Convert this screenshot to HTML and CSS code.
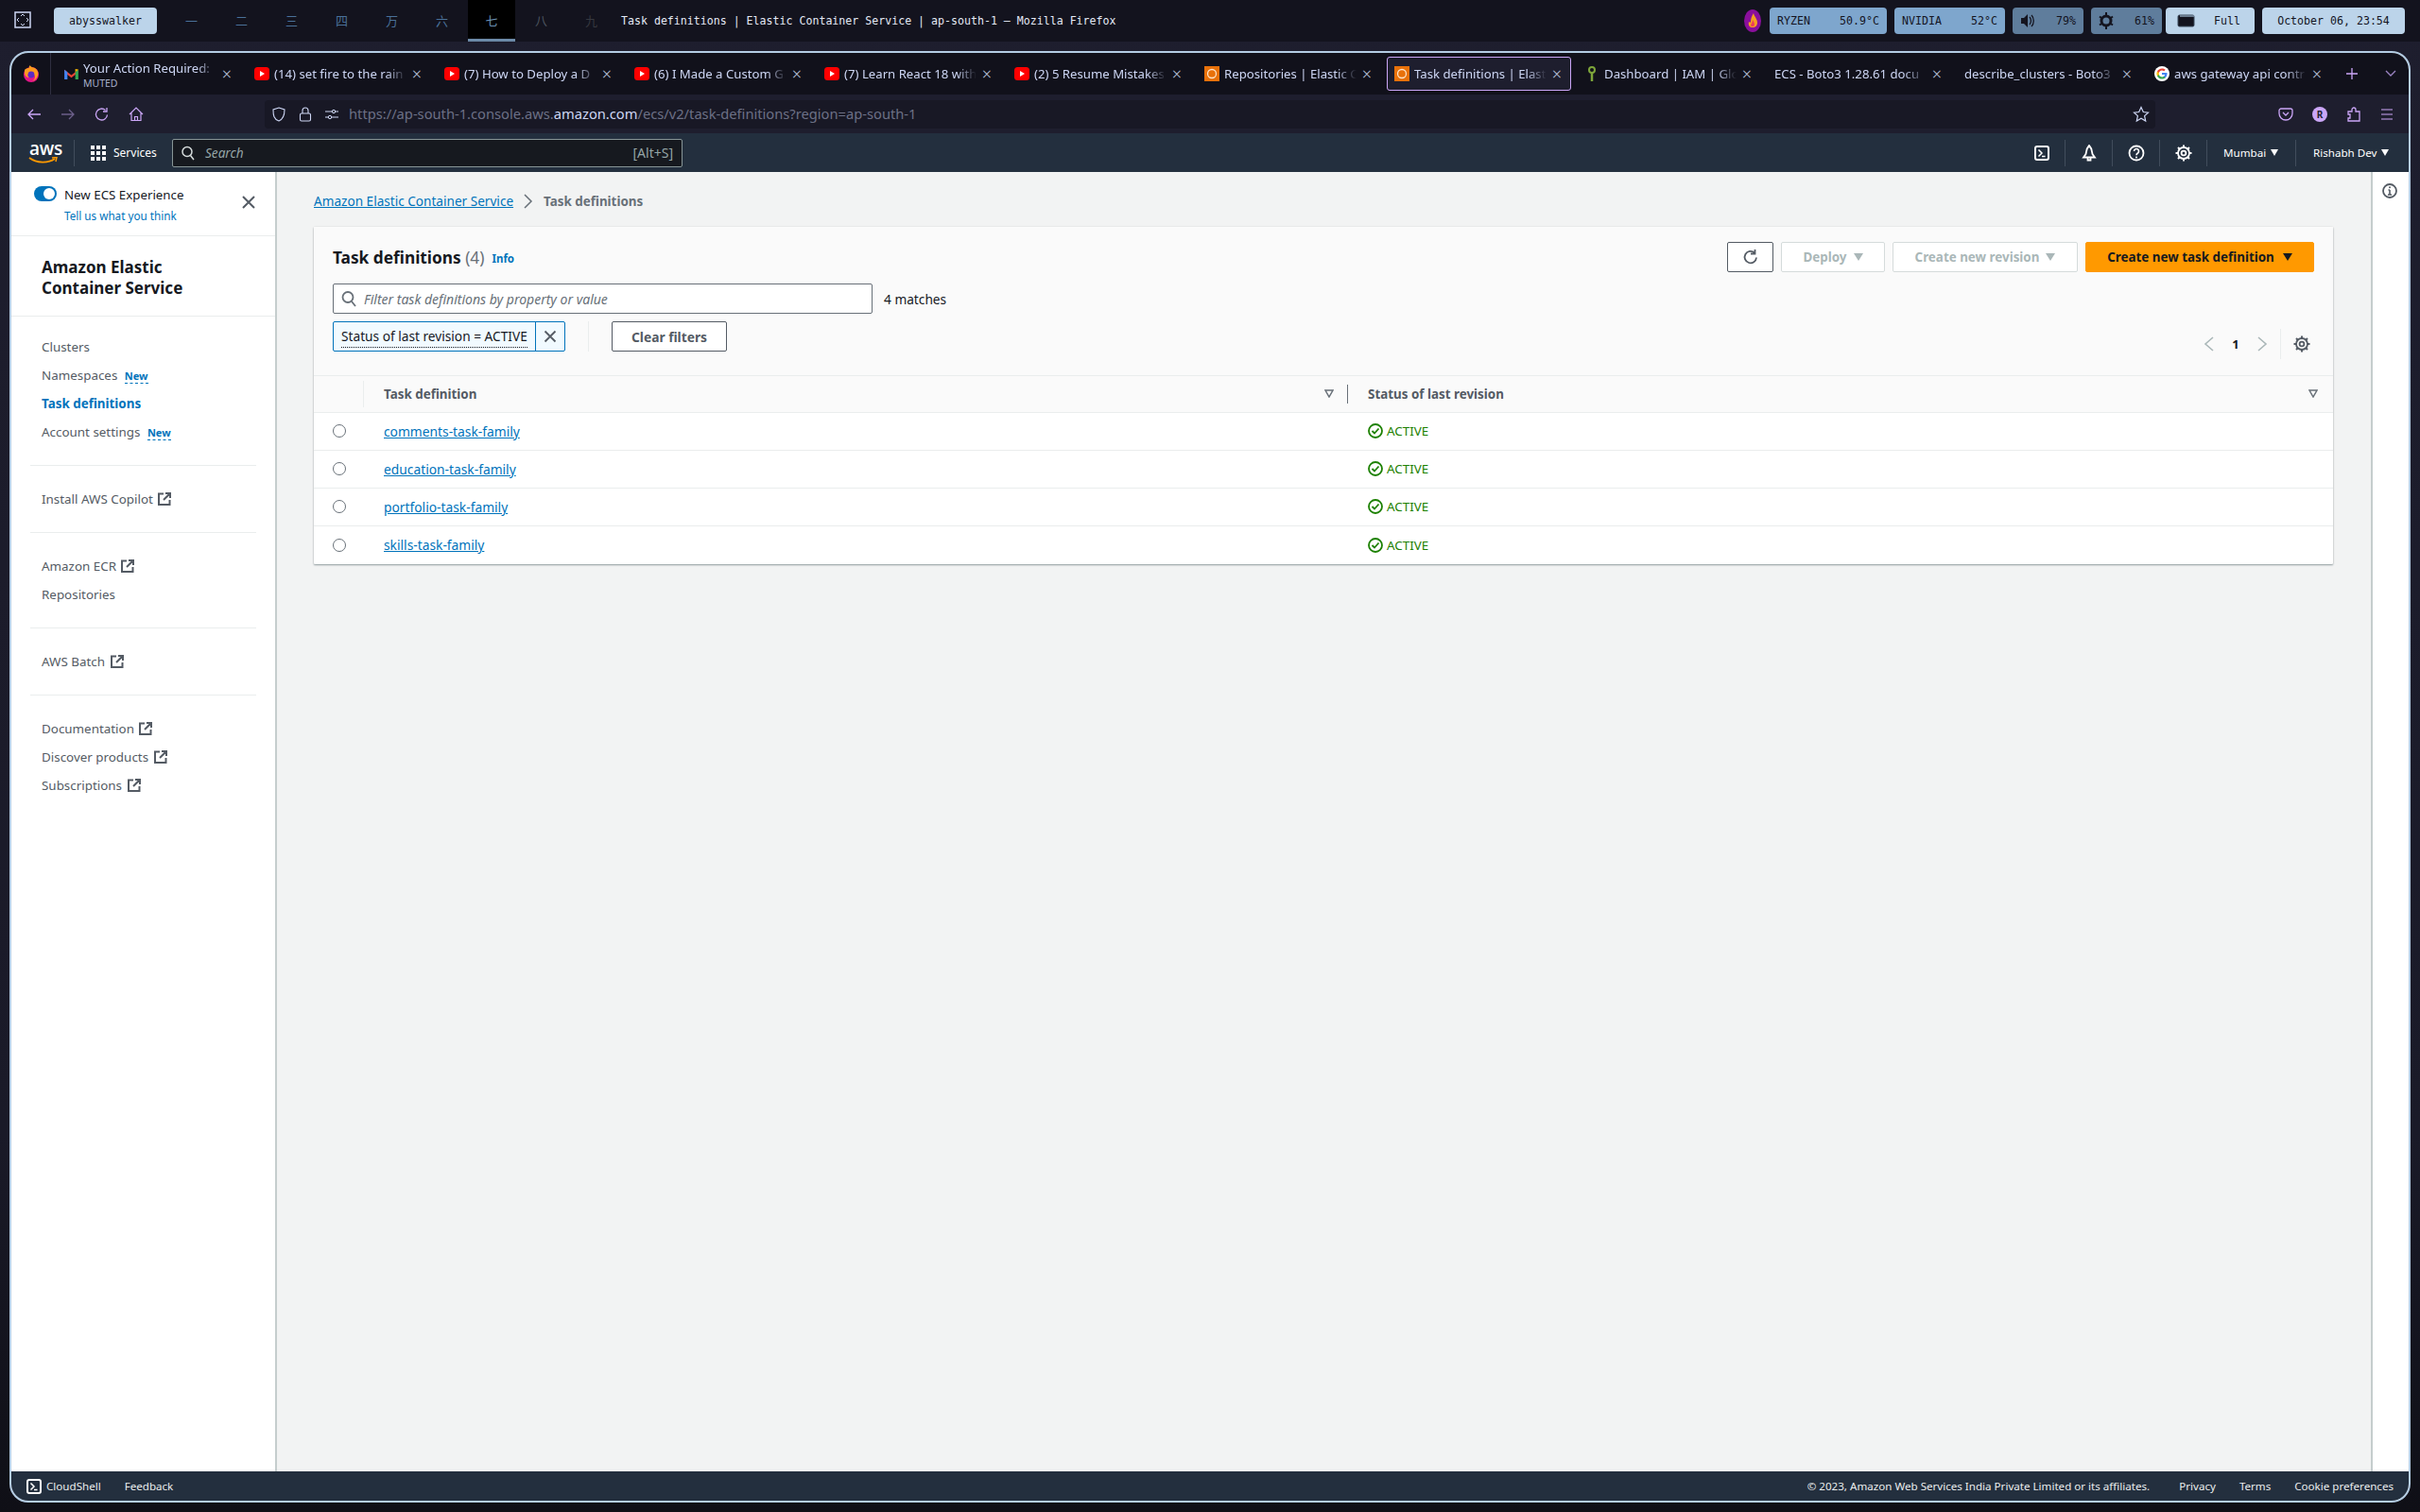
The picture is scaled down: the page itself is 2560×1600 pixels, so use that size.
FILE: index.html
```html
<!DOCTYPE html>
<html lang="en">
<head>
    <meta charset="UTF-8">
    <title>Task definitions | Elastic Container Service</title>
    <link rel="stylesheet" href="styles.css">
</head>
<body>
    <header class="wm-bar">
        <svg class="wm-logo" width="20" height="20" viewBox="0 0 20 20"><rect x="1" y="1" width="16" height="16" fill="none" stroke="#cdd6f4" stroke-width="1.5"/><path d="M7 5l2-2 2 2M7 13l2 2 2-2M5 7l-2 2 2 2M13 7l2 2-2 2" fill="none" stroke="#cdd6f4" stroke-width="1"/></svg>
        <div class="wm-user">abysswalker</div>
        <div class="wm-spaces">
            <span class="ws ws-a">一</span><span class="ws ws-a">二</span><span class="ws ws-a">三</span><span class="ws ws-a">四</span><span class="ws ws-a">万</span><span class="ws ws-a">六</span><span class="ws ws-on">七</span><span class="ws ws-b">八</span><span class="ws ws-c">九</span>
        </div>
        <div class="wm-title">Task definitions | Elastic Container Service | ap-south-1 – Mozilla Firefox</div>
        <div class="wm-right">
            <svg class="flame" width="18" height="24" viewBox="0 0 18 24"><ellipse cx="9" cy="12" rx="9" ry="12" fill="#8a0f9c"/><path d="M10 4c1 4 4 6 4 10 0 3-2 5-5 5s-5-2-4-6c1 1 2 1 2 0 0-3 1-6 3-9z" fill="#f5a020"/><path d="M9 11c1 2 2 3 2 5s-3 3-4 1c0-2 2-3 2-6z" fill="#ef3b5c"/></svg>
            <div class="pill pill-blue pill-ryzen"><span>RYZEN</span><span>50.9°C</span></div>
            <div class="pill pill-blue pill-nvidia"><span>NVIDIA</span><span>52°C</span></div>
            <div class="pill pill-slate pill-vol">
                <svg width="16" height="16" viewBox="0 0 16 16"><path d="M1 5h3l4-4v14l-4-4H1z" fill="#14141f"/><path d="M10 4c2 2 2 6 0 8M12 2c3 3 3 9 0 12" fill="none" stroke="#14141f" stroke-width="1.3"/></svg>
                <span>79%</span>
            </div>
            <div class="pill pill-slate pill-bright">
                <svg width="16" height="18" viewBox="0 0 16 18"><circle cx="8" cy="9" r="5" fill="none" stroke="#14141f" stroke-width="3"/><path d="M8 0v3M8 15v3M1 4.500l2 1.500M13 12l2 1.500M1 13.500l2-1.500M13 6l2-1.500" stroke="#14141f" stroke-width="2"/></svg>
                <span>61%</span>
            </div>
            <div class="pill pill-light pill-batt">
                <svg width="20" height="14" viewBox="0 0 20 14"><rect x="1" y="1" width="17" height="12" rx="1.500" fill="#14141f" stroke="#3b4a5c"/><rect x="3" y="1" width="15" height="2" fill="#6b7c8f"/></svg>
                <span>Full</span>
            </div>
            <div class="pill pill-light pill-date">October 06, 23:54</div>
        </div>
    </header>

    <div class="window">
        <div class="tabbar">
            <div class="ff-slot">
                <svg width="18" height="18" viewBox="0 0 18 18"><circle cx="9" cy="10" r="8" fill="#e31587"/><path d="M2 5c2-2 4-2 5-2-1-1 0-2 1-3 0 2 3 2 5 3 3 2 4 5 3 8-1 3-3 5-6 6 3-2 4-5 2-7-1-2-4-2-6-1-1 1-1 3 1 4-3 0-5-2-5-5 0-1 0-2 0-3z" fill="#ff9a1f"/><circle cx="9" cy="10" r="3.400" fill="#5b2bc4"/></svg>
            </div>
            <div class="tab tab-mail">
                <svg class="fav" width="15" height="12" viewBox="0 0 16 13"><path d="M0 2l8 6 8-6v3l-8 6-8-6z" fill="#ea4335"/><path d="M0 2v11h3.500V4.600z" fill="#4285f4"/><path d="M16 2v11h-3.500V4.600z" fill="#34a853"/><path d="M12.500 4.600L16 2v-.5L12.500 1z" fill="#fbbc04"/></svg>
                <div class="tab-stack"><span class="tab-text">Your Action Required:</span><span class="tab-sub">MUTED</span></div>
                <span class="tab-x">×</span>
            </div>
            <div class="tab"><svg class="fav" width="16" height="16" viewBox="0 0 16 16"><rect y="1" width="16" height="14" rx="3.500" fill="#f00"/><path d="M6 5l5 3-5 3z" fill="#fff"/></svg><span class="tab-text">(14) set fire to the rain</span><span class="tab-x">×</span></div>
            <div class="tab"><svg class="fav" width="16" height="16" viewBox="0 0 16 16"><rect y="1" width="16" height="14" rx="3.500" fill="#f00"/><path d="M6 5l5 3-5 3z" fill="#fff"/></svg><span class="tab-text">(7) How to Deploy a D</span><span class="tab-x">×</span></div>
            <div class="tab"><svg class="fav" width="16" height="16" viewBox="0 0 16 16"><rect y="1" width="16" height="14" rx="3.500" fill="#f00"/><path d="M6 5l5 3-5 3z" fill="#fff"/></svg><span class="tab-text">(6) I Made a Custom G</span><span class="tab-x">×</span></div>
            <div class="tab"><svg class="fav" width="16" height="16" viewBox="0 0 16 16"><rect y="1" width="16" height="14" rx="3.500" fill="#f00"/><path d="M6 5l5 3-5 3z" fill="#fff"/></svg><span class="tab-text">(7) Learn React 18 with</span><span class="tab-x">×</span></div>
            <div class="tab"><svg class="fav" width="16" height="16" viewBox="0 0 16 16"><rect y="1" width="16" height="14" rx="3.500" fill="#f00"/><path d="M6 5l5 3-5 3z" fill="#fff"/></svg><span class="tab-text">(2) 5 Resume Mistakes</span><span class="tab-x">×</span></div>
            <div class="tab"><svg class="fav" width="16" height="16" viewBox="0 0 16 16"><rect width="16" height="16" fill="#e8710a"/><circle cx="8" cy="8" r="4.500" fill="none" stroke="#fde3c8" stroke-width="1.300"/></svg><span class="tab-text">Repositories | Elastic C</span><span class="tab-x">×</span></div>
            <div class="tab tab-on"><svg class="fav" width="16" height="16" viewBox="0 0 16 16"><rect width="16" height="16" fill="#e8710a"/><circle cx="8" cy="8" r="4.500" fill="none" stroke="#fde3c8" stroke-width="1.300"/></svg><span class="tab-text">Task definitions | Elast</span><span class="tab-x">×</span></div>
            <div class="tab"><svg class="fav" width="16" height="16" viewBox="0 0 16 16"><circle cx="8" cy="4" r="3" fill="none" stroke="#7da53a" stroke-width="2"/><path d="M8 7v9" stroke="#7da53a" stroke-width="2.500"/></svg><span class="tab-text">Dashboard | IAM | Glob</span><span class="tab-x">×</span></div>
            <div class="tab"><span class="tab-text">ECS - Boto3 1.28.61 docu</span><span class="tab-x">×</span></div>
            <div class="tab"><span class="tab-text">describe_clusters - Boto3</span><span class="tab-x">×</span></div>
            <div class="tab"><svg class="fav" width="16" height="16" viewBox="0 0 16 16"><circle cx="8" cy="8" r="8" fill="#fff"/><path d="M13.500 8.100c0-.4 0-.8-.1-1.100H8v2.100h3.100c-.1.700-.5 1.300-1.100 1.700v1.400h1.800c1.100-1 1.700-2.400 1.700-4.100z" fill="#4285f4"/><path d="M8 13.600c1.500 0 2.800-.5 3.800-1.400L10 10.800c-.5.300-1.200.6-2 .6-1.500 0-2.700-1-3.100-2.300H3v1.400c.9 1.900 2.800 3.100 5 3.100z" fill="#34a853"/><path d="M4.900 9.100c-.2-.7-.2-1.500 0-2.200V5.500H3c-.8 1.500-.8 3.500 0 5z" fill="#fbbc04"/><path d="M8 4.600c.8 0 1.600.3 2.100.8l1.600-1.600C10.800 2.900 9.500 2.400 8 2.400c-2.200 0-4.100 1.300-5 3.100l1.900 1.400C5.300 5.600 6.500 4.600 8 4.600z" fill="#ea4335"/></svg><span class="tab-text">aws gateway api contr</span><span class="tab-x">×</span></div>
            <svg class="tab-plus" width="16" height="16" viewBox="0 0 16 16"><path d="M8 2v12M2 8h12" stroke="#cba6f7" stroke-width="1.300"/></svg>
            <svg class="tab-more" width="14" height="10" viewBox="0 0 14 10"><path d="M2 2l5 5 5-5" fill="none" stroke="#9c84c4" stroke-width="1.300"/></svg>
        </div>

        <div class="navbar">
            <div class="nav-btns">
                <svg width="16" height="16" viewBox="0 0 16 16"><path d="M15 8H2M7 3L2 8l5 5" fill="none" stroke="#cba6f7" stroke-width="1.300"/></svg>
                <svg width="16" height="16" viewBox="0 0 16 16"><path d="M1 8h13M9 3l5 5-5 5" fill="none" stroke="#6c5f8a" stroke-width="1.300"/></svg>
                <svg width="16" height="16" viewBox="0 0 16 16"><path d="M13.500 8.500A6 6 0 1 1 11.500 3.500M13 1v4H9" fill="none" stroke="#cba6f7" stroke-width="1.300"/></svg>
                <svg width="16" height="16" viewBox="0 0 16 16"><path d="M1 8l7-7 7 7M3 6.500V14.500h10V6.500M6.500 14.500v-4h3v4" fill="none" stroke="#cba6f7" stroke-width="1.200"/></svg>
            </div>
            <div class="urlbar">
                <svg width="14" height="16" viewBox="0 0 14 16"><path d="M7 1l6 2c0 6-1 10-6 12C1.500 13 1 9 1 3z" fill="none" stroke="#cdd6f4" stroke-width="1.100"/></svg>
                <svg class="url-lock" width="14" height="16" viewBox="0 0 14 16"><rect x="1.500" y="7" width="11" height="8" rx="1.500" fill="none" stroke="#cdd6f4" stroke-width="1.100"/><path d="M4 7V4a3 3 0 0 1 6 0v3" fill="none" stroke="#cdd6f4" stroke-width="1.100"/></svg>
                <svg class="url-perm" width="16" height="14" viewBox="0 0 16 14"><path d="M1 4h7M12 4h3M1 10h3M8 10h7" stroke="#cdd6f4" stroke-width="1.100"/><circle cx="10" cy="4" r="1.700" fill="none" stroke="#cdd6f4"/><circle cx="6" cy="10" r="1.700" fill="none" stroke="#cdd6f4"/></svg>
                <div class="url"><span>https://ap-south-1.console.aws.</span><b>amazon.com</b><span>/ecs/v2/task-definitions?region=ap-south-1</span></div>
                <svg class="url-star" width="18" height="18" viewBox="0 0 18 18"><path d="M9 1.500l2.300 5 5.200.6-3.900 3.500 1.100 5.400L9 13.300 4.300 16l1.100-5.400L1.500 7.100l5.200-.6z" fill="none" stroke="#cdd6f4" stroke-width="1.200"/></svg>
            </div>
            <div class="nav-right">
                <svg width="16" height="16" viewBox="0 0 16 16"><path d="M3 2h10a2 2 0 0 1 2 2v3A7 7 0 0 1 1 7V4a2 2 0 0 1 2-2z" fill="none" stroke="#cba6f7" stroke-width="1.300"/><path d="M5 6l3 3 3-3" fill="none" stroke="#cba6f7" stroke-width="1.300"/></svg>
                <span class="avatar">R</span>
                <svg width="16" height="18" viewBox="0 0 16 18"><path d="M2 6h4V4a2 2 0 0 1 4 0v2h4v10H2v-3h2v-4H2z" fill="none" stroke="#cba6f7" stroke-width="1.300"/></svg>
                <svg width="14" height="14" viewBox="0 0 14 14"><path d="M1 2h12M1 7h12M1 12h12" stroke="#cba6f7" stroke-width="1.200"/></svg>
            </div>
        </div>

        <div class="aws-head">
            <div class="aws-logo">
                <span class="aws-word">aws</span>
                <svg width="32" height="9" viewBox="0 0 32 9"><path d="M1 1c8 6 20 6 27 1" fill="none" stroke="#ff9900" stroke-width="1.800"/><path d="M25 1l5-.5-1 4.500" fill="none" stroke="#ff9900" stroke-width="1.500"/></svg>
            </div>
            <div class="aws-services">
                <svg width="16" height="16" viewBox="0 0 16 16" fill="#fff"><rect width="4" height="4"/><rect x="6" width="4" height="4"/><rect x="12" width="4" height="4"/><rect y="6" width="4" height="4"/><rect x="6" y="6" width="4" height="4"/><rect x="12" y="6" width="4" height="4"/><rect y="12" width="4" height="4"/><rect x="6" y="12" width="4" height="4"/><rect x="12" y="12" width="4" height="4"/></svg>
                <span>Services</span>
            </div>
            <div class="aws-search">
                <svg width="14" height="16" viewBox="0 0 14 16"><circle cx="6" cy="6.500" r="5" fill="none" stroke="#d5dbdb" stroke-width="1.500"/><path d="M9.500 10.500l3.500 4.500" stroke="#d5dbdb" stroke-width="1.500"/></svg>
                <i>Search</i>
                <span>[Alt+S]</span>
            </div>
            <div class="aws-right">
                <div class="aws-ico"><svg width="16" height="16" viewBox="0 0 16 16"><rect x="1" y="1" width="14" height="14" rx="2" fill="none" stroke="#fff" stroke-width="2"/><path d="M4.500 4.500L8 8l-3.500 3.500M8 11.500h3.500" fill="none" stroke="#fff" stroke-width="1.500"/></svg></div>
                <div class="aws-ico"><svg width="16" height="18" viewBox="0 0 16 18"><path d="M8 1C5 4 5 8 4.500 10L2 13.500h12L11.500 10C11 8 11 4 8 1zM6.500 14v2.500h3V14" fill="none" stroke="#fff" stroke-width="1.800"/></svg></div>
                <div class="aws-ico"><svg width="18" height="18" viewBox="0 0 18 18"><circle cx="9" cy="9" r="7.500" fill="none" stroke="#fff" stroke-width="1.800"/><path d="M6.500 7a2.500 2.500 0 1 1 4 2c-1 .7-1.500 1.200-1.500 2.200" fill="none" stroke="#fff" stroke-width="1.600"/><circle cx="9" cy="13.500" r="1" fill="#fff"/></svg></div>
                <div class="aws-ico"><svg width="18" height="18" viewBox="0 0 18 18"><circle cx="9" cy="9" r="6" fill="none" stroke="#fff" stroke-width="1.800"/><circle cx="9" cy="9" r="2.400" fill="none" stroke="#fff" stroke-width="1.800"/><path d="M9 .5v3M9 14.500v3M.5 9h3M14.500 9h3M3 3l2 2M13 13l2 2M15 3l-2 2M5 13l-2 2" stroke="#fff" stroke-width="2"/></svg></div>
                <div class="aws-menu aws-region">Mumbai <span class="tri"></span></div>
                <div class="aws-menu aws-user">Rishabh Dev <span class="tri"></span></div>
            </div>
        </div>

        <div class="content">
            <aside class="side">
                <div class="side-top">
                    <div class="side-toggle">
                        <span class="toggle"></span>
                        <div>
                            <div class="toggle-label">New ECS Experience</div>
                            <a class="toggle-link">Tell us what you think</a>
                        </div>
                    </div>
                    <svg class="side-close" width="16" height="16" viewBox="0 0 16 16"><path d="M2 2l12 12M14 2L2 14" stroke="#545b64" stroke-width="2"/></svg>
                </div>
                <h2 class="side-title">Amazon Elastic Container Service</h2>
                <nav class="side-nav">
                    <ul class="group">
                        <li>Clusters</li>
                        <li>Namespaces <em>New</em></li>
                        <li class="on">Task definitions</li>
                        <li>Account settings <em>New</em></li>
                    </ul>
                    <ul class="group">
                        <li>Install AWS Copilot <svg class="ext" viewBox="0 0 14 14"><path d="M6 1.500H1v11.500h11.500V8M8 1h5v5M13 1L6 8" fill="none" stroke="#545b64" stroke-width="2"/></svg></li>
                    </ul>
                    <ul class="group">
                        <li>Amazon ECR <svg class="ext" viewBox="0 0 14 14"><path d="M6 1.500H1v11.500h11.500V8M8 1h5v5M13 1L6 8" fill="none" stroke="#545b64" stroke-width="2"/></svg></li>
                        <li>Repositories</li>
                    </ul>
                    <ul class="group">
                        <li>AWS Batch <svg class="ext" viewBox="0 0 14 14"><path d="M6 1.500H1v11.500h11.500V8M8 1h5v5M13 1L6 8" fill="none" stroke="#545b64" stroke-width="2"/></svg></li>
                    </ul>
                    <ul class="group">
                        <li>Documentation <svg class="ext" viewBox="0 0 14 14"><path d="M6 1.500H1v11.500h11.500V8M8 1h5v5M13 1L6 8" fill="none" stroke="#545b64" stroke-width="2"/></svg></li>
                        <li>Discover products <svg class="ext" viewBox="0 0 14 14"><path d="M6 1.500H1v11.500h11.500V8M8 1h5v5M13 1L6 8" fill="none" stroke="#545b64" stroke-width="2"/></svg></li>
                        <li>Subscriptions <svg class="ext" viewBox="0 0 14 14"><path d="M6 1.500H1v11.500h11.500V8M8 1h5v5M13 1L6 8" fill="none" stroke="#545b64" stroke-width="2"/></svg></li>
                    </ul>
                </nav>
            </aside>

            <main class="main">
                <div class="crumbs">
                    <a>Amazon Elastic Container Service</a>
                    <svg width="12" height="16" viewBox="0 0 12 16"><path d="M2 1l7 7-7 7" fill="none" stroke="#687078" stroke-width="1.500"/></svg>
                    <b>Task definitions</b>
                </div>

                <section class="card">
                    <div class="card-head">
                        <div class="title-row">
                            <h1>Task definitions <span>(4)</span></h1>
                            <a class="info">Info</a>
                            <div class="actions">
                                <button class="btn btn-refresh"><svg width="18" height="18" viewBox="0 0 18 18"><path d="M15 9.500A6.200 6.200 0 1 1 13 4.500M13.500 1v4.500H9" fill="none" stroke="#545b64" stroke-width="1.800"/></svg></button>
                                <button class="btn btn-off btn-deploy">Deploy <span class="tri tri-off"></span></button>
                                <button class="btn btn-off btn-rev">Create new revision <span class="tri tri-off"></span></button>
                                <button class="btn btn-main">Create new task definition <span class="tri tri-dark"></span></button>
                            </div>
                        </div>
                        <div class="filter-row">
                            <div class="filter">
                                <svg width="16" height="18" viewBox="0 0 16 18"><circle cx="7" cy="7.500" r="5.500" fill="none" stroke="#687078" stroke-width="1.800"/><path d="M11 12l4 5" stroke="#687078" stroke-width="1.800"/></svg>
                                <i>Filter task definitions by property or value</i>
                            </div>
                            <span class="matches">4 matches</span>
                        </div>
                        <div class="token-row">
                            <div class="token">
                                <div class="token-text"><span>Status of last revision = ACTIVE</span></div>
                                <span class="token-x"><svg width="14" height="14" viewBox="0 0 14 14"><path d="M1.500 1.500l11 11M12.500 1.500l-11 11" stroke="#545b64" stroke-width="1.800"/></svg></span>
                            </div>
                            <span class="token-sep"></span>
                            <button class="btn btn-clear">Clear filters</button>
                            <div class="pager">
                                <svg width="12" height="18" viewBox="0 0 12 18"><path d="M10 2L2 9l8 7" fill="none" stroke="#aab7b8" stroke-width="1.600"/></svg>
                                <b>1</b>
                                <svg width="12" height="18" viewBox="0 0 12 18"><path d="M2 2l8 7-8 7" fill="none" stroke="#aab7b8" stroke-width="1.600"/></svg>
                                <span class="pager-sep"></span>
                                <svg width="18" height="18" viewBox="0 0 18 18"><circle cx="9" cy="9" r="6" fill="none" stroke="#545b64" stroke-width="1.800"/><circle cx="9" cy="9" r="2.400" fill="none" stroke="#545b64" stroke-width="1.800"/><path d="M9 .5v3M9 14.500v3M.5 9h3M14.500 9h3M3 3l2 2M13 13l2 2M15 3l-2 2M5 13l-2 2" stroke="#545b64" stroke-width="2"/></svg>
                            </div>
                        </div>
                    </div>

                    <div class="t-head">
                        <div class="t-sel"></div>
                        <div class="t-name">Task definition<svg class="sort" width="10" height="9" viewBox="0 0 10 9"><path d="M1 1h8L5 8z" fill="none" stroke="#687078" stroke-width="1.500"/></svg></div>
                        <div class="t-status">Status of last revision<svg class="sort" width="10" height="9" viewBox="0 0 10 9"><path d="M1 1h8L5 8z" fill="none" stroke="#687078" stroke-width="1.500"/></svg></div>
                    </div>
                    <div class="t-row">
                        <div class="t-sel"><span class="radio"></span></div>
                        <div class="t-name"><a>comments-task-family</a></div>
                        <div class="t-status"><svg width="16" height="16" viewBox="0 0 16 16"><circle cx="8" cy="8" r="7" fill="none" stroke="#1d8102" stroke-width="1.800"/><path d="M4.500 8l2.500 2.500 4.500-5" fill="none" stroke="#1d8102" stroke-width="1.800"/></svg><span>ACTIVE</span></div>
                    </div>
                    <div class="t-row">
                        <div class="t-sel"><span class="radio"></span></div>
                        <div class="t-name"><a>education-task-family</a></div>
                        <div class="t-status"><svg width="16" height="16" viewBox="0 0 16 16"><circle cx="8" cy="8" r="7" fill="none" stroke="#1d8102" stroke-width="1.800"/><path d="M4.500 8l2.500 2.500 4.500-5" fill="none" stroke="#1d8102" stroke-width="1.800"/></svg><span>ACTIVE</span></div>
                    </div>
                    <div class="t-row">
                        <div class="t-sel"><span class="radio"></span></div>
                        <div class="t-name"><a>portfolio-task-family</a></div>
                        <div class="t-status"><svg width="16" height="16" viewBox="0 0 16 16"><circle cx="8" cy="8" r="7" fill="none" stroke="#1d8102" stroke-width="1.800"/><path d="M4.500 8l2.500 2.500 4.500-5" fill="none" stroke="#1d8102" stroke-width="1.800"/></svg><span>ACTIVE</span></div>
                    </div>
                    <div class="t-row">
                        <div class="t-sel"><span class="radio"></span></div>
                        <div class="t-name"><a>skills-task-family</a></div>
                        <div class="t-status"><svg width="16" height="16" viewBox="0 0 16 16"><circle cx="8" cy="8" r="7" fill="none" stroke="#1d8102" stroke-width="1.800"/><path d="M4.500 8l2.500 2.500 4.500-5" fill="none" stroke="#1d8102" stroke-width="1.800"/></svg><span>ACTIVE</span></div>
                    </div>
                </section>
            </main>

            <aside class="tools">
                <svg width="16" height="16" viewBox="0 0 16 16"><circle cx="8" cy="8" r="7" fill="none" stroke="#545b64" stroke-width="1.800"/><path d="M8 7v5M6 12h4M6.500 7H8" fill="none" stroke="#545b64" stroke-width="1.600"/><circle cx="8" cy="4.300" r="1" fill="#545b64"/></svg>
            </aside>
        </div>

        <footer class="aws-foot">
            <svg width="16" height="16" viewBox="0 0 16 16"><rect x="1" y="1" width="14" height="14" rx="2" fill="none" stroke="#fff" stroke-width="2"/><path d="M4.500 4.500L8 8l-3.500 3.500M8 11.500h3.500" fill="none" stroke="#fff" stroke-width="1.500"/></svg>
            <span class="foot-shell">CloudShell</span>
            <span class="foot-feedback">Feedback</span>
            <span class="foot-copy">© 2023, Amazon Web Services India Private Limited or its affiliates.</span>
            <span class="foot-link foot-first">Privacy</span>
            <span class="foot-link">Terms</span>
            <span class="foot-link">Cookie preferences</span>
        </footer>
    </div>
</body>
</html>
```

FILE: styles.css
```css
* {
    box-sizing: border-box;
}

html, body {
    height: 100%;
}

body {
    margin: 0;
    background: linear-gradient(180deg, #1e1e2e, #1a1a28 75%, #0f0f16);
    font-family: "Noto Sans", sans-serif;
    font-size: 14px;
    display: flex;
    flex-direction: column;
    overflow: hidden;
}

ul {
    list-style: none;
    margin: 0;
    padding: 0;
}

button {
    font-family: inherit;
}

/* window manager bar */
.wm-bar {
    height: 44px;
    flex: none;
    background-color: #13131e;
    display: flex;
    align-items: center;
    font-family: "DejaVu Sans Mono", monospace;
    font-size: 11.6px;
    color: #cdd6f4;
}

.wm-logo {
    margin-left: 15px;
}

.wm-user {
    margin-left: 22px;
    width: 109px;
    height: 28px;
    line-height: 28px;
    text-align: center;
    background-color: #bcd4ea;
    color: #14141f;
    border-radius: 4px;
}

.wm-spaces {
    display: flex;
    margin-left: 10px;
    align-self: stretch;
}

.ws {
    width: 53px;
    height: 44px;
    line-height: 44px;
    text-align: center;
    font-family: "Noto Sans CJK SC", sans-serif;
    font-size: 13px;
}

.ws-a {
    color: #4a7199;
}

.ws-b {
    color: #4d5560;
}

.ws-c {
    color: #36383f;
}

.ws-on {
    background-color: #000;
    color: #6d93b8;
    border-bottom: 3px solid #6c8aa8;
    width: 50px;
    margin: 0 1px;
}

.wm-title {
    margin-left: 5px;
    color: #e4e9f5;
}

.wm-right {
    margin-left: auto;
    margin-right: 16px;
    display: flex;
    align-items: center;
    gap: 8px;
    color: #14141f;
}

.flame {
    margin-right: 1px;
}

.pill {
    height: 28px;
    border-radius: 4px;
    display: flex;
    align-items: center;
    justify-content: space-between;
    padding: 0 8px;
}

.pill-blue {
    background-color: #7ea6cd;
}

.pill-slate {
    background-color: #5f7d9c;
}

.pill-light {
    background-color: #bcd4ea;
}

.pill-ryzen {
    width: 124px;
}

.pill-nvidia {
    width: 117px;
}

.pill-vol, .pill-bright {
    width: 75px;
}

.pill-bright {
    margin-right: -4px;
}

.pill-batt {
    width: 94px;
    padding: 0 15px 0 12px;
}

.pill-date {
    width: 151px;
    justify-content: center;
}

/* browser window */
.window {
    margin: 10px;
    flex: 1;
    min-height: 0;
    border: 2px solid #b4cde4;
    border-radius: 20px;
    overflow: hidden;
    display: flex;
    flex-direction: column;
    background-color: #fff;
}

.tabbar {
    height: 44px;
    flex: none;
    background-color: #11111b;
    display: flex;
    align-items: center;
    color: #cdd6f4;
}

.ff-slot {
    width: 42px;
    height: 44px;
    border-right: 1px solid #2f2f40;
    margin-right: 6px;
    display: flex;
    align-items: center;
    justify-content: center;
    flex: none;
}

.tab {
    width: 195px;
    height: 36px;
    margin-right: 6px;
    flex: none;
    display: flex;
    align-items: center;
    padding: 0 8px 0 7px;
    border: 1px solid transparent;
    border-radius: 3px;
    gap: 5px;
}

.tab-on {
    background-color: #1e1e2e;
    border-color: #cba6f7;
}

.fav {
    flex: none;
}

.tab-text {
    flex: 1;
    min-width: 0;
    white-space: nowrap;
    overflow: hidden;
    font-size: 13.2px;
    -webkit-mask-image: linear-gradient(to right, #000 85%, transparent);
    mask-image: linear-gradient(to right, #000 85%, transparent);
}

.tab-stack {
    flex: 1;
    min-width: 0;
    display: flex;
    flex-direction: column;
}

.tab-stack .tab-text {
    flex: none;
    line-height: 20px;
    font-size: 13.2px;
}

.tab-sub {
    font-size: 10.5px;
    line-height: 13px;
    color: #a6adc8;
}

.tab-x {
    flex: none;
    width: 12px;
    text-align: center;
    font-size: 18px;
    font-weight: 300;
    line-height: 16px;
    color: #bac2de;
}

.tab-plus {
    flex: none;
    margin-left: 1px;
}

.tab-more {
    flex: none;
    margin-left: 26px;
}

.tab:nth-last-of-type(1) {
    margin-right: 13px;
}

.navbar {
    height: 41px;
    flex: none;
    background-color: #1e1e2e;
    display: flex;
    align-items: center;
}

.nav-btns {
    display: flex;
    gap: 20px;
    margin-left: 16px;
    width: 252px;
    flex: none;
}

.urlbar {
    width: 2000px;
    height: 30px;
    flex: none;
    background-color: #181825;
    border-radius: 4px;
    display: flex;
    align-items: center;
    padding: 0 6px 0 8px;
}

.url-lock {
    margin-left: 14px;
}

.url-perm {
    margin-left: 13px;
}

.url {
    color: #6c7086;
    font-size: 14.7px;
    white-space: nowrap;
    margin-left: 10px;
    margin-bottom: 1px;
}

.url b {
    font-weight: 400;
    color: #cdd6f4;
}

.url-star {
    margin-left: auto;
}

.nav-right {
    margin-left: auto;
    margin-right: 16px;
    display: flex;
    align-items: center;
    gap: 20px;
}

.avatar {
    width: 16px;
    height: 16px;
    border-radius: 50%;
    background-color: #cba6f7;
    color: #1e1e2e;
    font-size: 10px;
    font-weight: 700;
    line-height: 16px;
    text-align: center;
}

/* aws console */
.aws-head {
    height: 41px;
    flex: none;
    background-color: #232f3e;
    display: flex;
    align-items: center;
    color: #fff;
    font-size: 12px;
}

.aws-logo {
    margin-left: 18px;
    width: 49px;
    height: 28px;
    border-right: 1px solid #414d5c;
    display: flex;
    flex-direction: column;
    line-height: 1;
}

.aws-word {
    font-family: "Open Sans", sans-serif;
    font-weight: 600;
    font-size: 19px;
    letter-spacing: -0.3px;
    line-height: 18px;
    height: 18px;
    margin-left: 1px;
}

.aws-services {
    display: flex;
    align-items: center;
    gap: 8px;
    margin-left: 17px;
    width: 86px;
}

.aws-search {
    width: 540px;
    height: 30px;
    background-color: #16191f;
    border: 1px solid #879596;
    border-radius: 2px;
    display: flex;
    align-items: center;
    padding: 0 9px;
    gap: 11px;
    color: #95a5a6;
    font-size: 13.6px;
}

.aws-search span {
    margin-left: auto;
    font-size: 14px;
}

.aws-right {
    margin-left: auto;
    display: flex;
    align-items: center;
    height: 28px;
}

.aws-ico {
    width: 50px;
    height: 28px;
    border-right: 1px solid #414d5c;
    display: flex;
    align-items: center;
    justify-content: center;
}

.aws-menu {
    height: 28px;
    display: flex;
    align-items: center;
    white-space: nowrap;
    font-size: 11.6px;
}

.aws-region {
    width: 94px;
    padding-left: 17px;
    border-right: 1px solid #414d5c;
}

.aws-user {
    width: 119px;
    padding-left: 18px;
}

.tri {
    display: inline-block;
    width: 0;
    height: 0;
    border-left: 4px solid transparent;
    border-right: 4px solid transparent;
    border-top: 7px solid #fff;
    margin-left: 5px;
}

.tri-off {
    border-left-width: 5px;
    border-right-width: 5px;
    border-top: 8px solid #aab7b8;
    margin-left: 7px;
}

.tri-dark {
    border-left-width: 5px;
    border-right-width: 5px;
    border-top: 8px solid #16191f;
    margin-left: 9px;
}

.content {
    flex: 1;
    min-height: 0;
    display: flex;
    background-color: #f2f3f3;
}

/* left nav */
.side {
    width: 281px;
    flex: none;
    background-color: #fff;
    border-right: 2px solid #c5cdcd;
}

.side-top {
    height: 68px;
    border-bottom: 1px solid #eaeded;
    display: flex;
    padding: 14px 20px 0 24px;
    justify-content: space-between;
}

.side-toggle {
    display: flex;
    gap: 8px;
    color: #16191f;
    font-size: 13.3px;
}

.toggle {
    width: 24px;
    height: 16px;
    margin-top: 1px;
    border-radius: 8px;
    background-color: #0073bb;
    position: relative;
}

.toggle::after {
    content: "";
    position: absolute;
    right: 2px;
    top: 2px;
    width: 12px;
    height: 12px;
    border-radius: 50%;
    background-color: #fff;
}

.toggle-label {
    line-height: 20px;
}

.toggle-link {
    display: block;
    font-size: 11.7px;
    line-height: 16px;
    margin-top: 4px;
    color: #0073bb;
}

.side-close {
    margin-top: 10px;
}

.side-title {
    margin: 0;
    height: 85px;
    padding: 22px 50px 0 32px;
    font-size: 17px;
    line-height: 22px;
    font-weight: 700;
    color: #16191f;
    border-bottom: 1px solid #eaeded;
}

.side-nav {
    padding: 0 20px;
}

.group {
    padding: 20px 0;
    border-bottom: 1px solid #eaeded;
}

.group:first-child {
    padding-top: 17px;
}

.group:last-child {
    border-bottom: none;
}

.group li {
    height: 30px;
    line-height: 30px;
    padding-left: 12px;
    color: #545b64;
    font-size: 13.4px;
    white-space: nowrap;
}

.group li.on {
    color: #0073bb;
    font-weight: 700;
}

.group em {
    font-style: normal;
    font-weight: 700;
    font-size: 11px;
    color: #0073bb;
    border-bottom: 1px dashed #0073bb;
    margin-left: 4px;
}

.ext {
    width: 14px;
    height: 14px;
    vertical-align: -2px;
    margin-left: 2px;
}

/* main */
.main {
    flex: 1;
    min-width: 0;
    padding: 20px 40px 0 39px;
}

.crumbs {
    height: 20px;
    line-height: 20px;
    display: flex;
    align-items: center;
    gap: 10px;
    font-size: 13.6px;
    padding-top: 1px;
}

.crumbs a {
    color: #0073bb;
    text-decoration: underline;
}

.crumbs b {
    color: #687078;
    font-size: 13.4px;
}

.card {
    margin-top: 18px;
    background-color: #fff;
    box-shadow: 0 1px 2px rgba(0, 28, 36, 0.4), 0 0 1px rgba(0, 28, 36, 0.2);
    border-radius: 1px;
}

.card-head {
    height: 157px;
    padding: 16px 20px 0 20px;
    background-color: #fafafa;
}

.title-row {
    display: flex;
    align-items: center;
    height: 32px;
}

.title-row h1 {
    margin: 0;
    font-size: 17.3px;
    font-weight: 700;
    color: #16191f;
}

.title-row h1 span {
    font-weight: 400;
    color: #687078;
}

.info {
    margin: 2px 0 0 8px;
    color: #0073bb;
    font-size: 11.5px;
    font-weight: 700;
}

.actions {
    margin-left: auto;
    display: flex;
    gap: 8px;
}

.btn {
    height: 32px;
    padding: 0;
    border-radius: 2px;
    font-size: 13.4px;
    font-weight: 700;
    background-color: #fff;
    border: 1px solid #545b64;
    color: #545b64;
    display: flex;
    align-items: center;
    justify-content: center;
}

.btn-refresh {
    width: 49px;
}

.btn-off {
    border-color: #d5dbdb;
    color: #aab7b8;
}

.btn-deploy {
    width: 110px;
}

.btn-rev {
    width: 196px;
}

.btn-main {
    width: 242px;
    background-color: #ff9900;
    border-color: #ff9900;
    color: #16191f;
}

.filter-row {
    display: flex;
    align-items: center;
    margin-top: 12px;
}

.filter {
    width: 571px;
    height: 32px;
    background-color: #fff;
    border: 1px solid #687078;
    border-radius: 2px;
    display: flex;
    align-items: center;
    padding: 0 8px;
    gap: 8px;
    color: #687078;
    font-size: 14px;
}

.matches {
    margin-left: 12px;
    color: #16191f;
    font-size: 13.7px;
}

.token-row {
    margin-top: 8px;
    display: flex;
    align-items: center;
    height: 32px;
}

.token {
    width: 246px;
    height: 32px;
    display: flex;
    border: 1px solid #0073bb;
    border-radius: 2px;
    background-color: #f1faff;
    font-size: 13.7px;
    color: #16191f;
}

.token-text {
    flex: 1;
    padding-left: 8px;
    line-height: 30px;
    white-space: nowrap;
}

.token-text span {
    padding-bottom: 2px;
    border-bottom: 1px dotted #16191f;
}

.token-x {
    width: 31px;
    flex: none;
    border-left: 1px solid #0073bb;
    display: flex;
    align-items: center;
    justify-content: center;
}

.token-sep {
    width: 1px;
    height: 32px;
    background-color: #eaeded;
    margin: 0 24px;
}

.btn-clear {
    width: 122px;
    font-size: 13.8px;
}

.pager {
    margin: 8px 4px -8px auto;
    display: flex;
    align-items: center;
    gap: 16px;
    height: 32px;
    color: #16191f;
    font-size: 13px;
}

.pager b {
    width: 12px;
    text-align: center;
}

.pager-sep {
    width: 1px;
    height: 32px;
    background-color: #eaeded;
    margin: 0 -3px;
}

.t-head, .t-row {
    display: flex;
    align-items: center;
    border-bottom: 1px solid #eaeded;
    height: 40px;
    padding-bottom: 1px;
}

.t-head {
    border-top: 1px solid #eaeded;
    background-color: #fafafa;
    color: #545b64;
    font-size: 13.4px;
    font-weight: 700;
}

.t-head .t-sel {
    border-right: 1px solid #eaeded;
    height: 28px;
}

.t-row {
    font-size: 13.8px;
}

.t-row:last-child {
    border-bottom: none;
}

.t-sel {
    width: 53px;
    flex: none;
    padding-left: 20px;
}

.t-name {
    width: 1041px;
    flex: none;
    padding-left: 21px;
    display: flex;
    align-items: center;
    justify-content: space-between;
    height: 28px;
}

.t-head .t-name {
    position: relative;
    padding-right: 15px;
}

.t-head .t-name::after {
    content: "";
    position: absolute;
    right: 0;
    top: 4px;
    height: 20px;
    width: 1px;
    background-color: #687078;
}

.t-name a {
    color: #0073bb;
    text-decoration: underline;
}

.t-status {
    flex: 1;
    padding: 0 16px 0 21px;
    display: flex;
    align-items: center;
    justify-content: space-between;
}

.t-row .t-status {
    justify-content: flex-start;
    gap: 4px;
    color: #1d8102;
    font-size: 13.4px;
}

.radio {
    display: block;
    width: 14px;
    height: 14px;
    border: 1.5px solid #687078;
    border-radius: 50%;
    background-color: #fff;
}

.tools {
    width: 40px;
    flex: none;
    background-color: #fff;
    border-left: 2px solid #c5cdcd;
    padding: 12px 0 0 10px;
}

.aws-foot {
    height: 31px;
    flex: none;
    background-color: #232f3e;
    color: #eaeded;
    font-size: 11.6px;
    display: flex;
    align-items: center;
    padding: 0 16px;
}

.foot-shell {
    margin-left: 5px;
}

.foot-feedback {
    margin-left: 25px;
}

.foot-copy {
    margin-left: auto;
}

.foot-link {
    margin-left: 25px;
}

.foot-first {
    margin-left: 31px;
}
```
